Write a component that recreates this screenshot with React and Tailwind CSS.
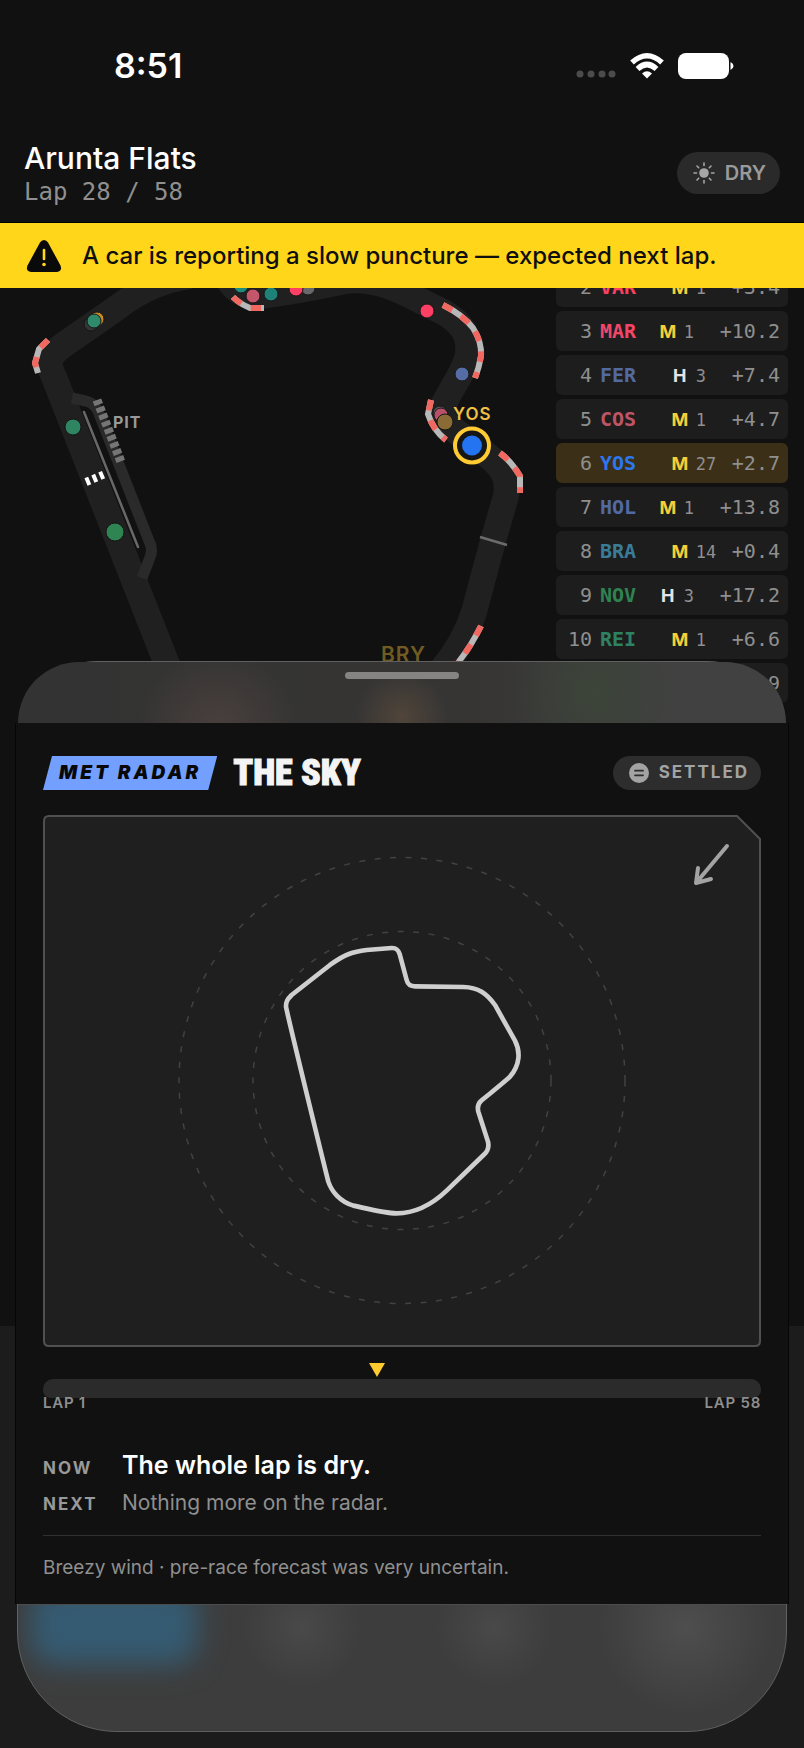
import React from 'react';
import clsx from 'clsx';

const CURRENT_LAP = 28;
const TOTAL_LAPS = 58;

const standings = [
    { pos: 2, code: 'VAR', color: 'text-[#f9405f]', tyre: 'M', age: 1, gap: '+3.4' },
    { pos: 3, code: 'MAR', color: 'text-[#f24568]', tyre: 'M', age: 1, gap: '+10.2' },
    { pos: 4, code: 'FER', color: 'text-[#5269a2]', tyre: 'H', age: 3, gap: '+7.4' },
    { pos: 5, code: 'COS', color: 'text-[#bd5567]', tyre: 'M', age: 1, gap: '+4.7' },
    { pos: 6, code: 'YOS', color: 'text-[#2c76ee]', tyre: 'M', age: 27, gap: '+2.7', selected: true },
    { pos: 7, code: 'HOL', color: 'text-[#5269a2]', tyre: 'M', age: 1, gap: '+13.8' },
    { pos: 8, code: 'BRA', color: 'text-[#3a7b98]', tyre: 'M', age: 14, gap: '+0.4' },
    { pos: 9, code: 'NOV', color: 'text-[#2e8350]', tyre: 'H', age: 3, gap: '+17.2' },
    { pos: 10, code: 'REI', color: 'text-[#2e8263]', tyre: 'M', age: 1, gap: '+6.6' },
];

const kerbs = [
    'M48 340 L39 349 L35 363 L38 373',
    'M233 297 Q240 304 250 308 L264 308',
    'M443 305 Q463 315 473 328 Q482 342 481 356 Q479 368 475 378',
    'M431 400 L428 414 Q433 430 446 440',
    'M500 453 Q511 461 520 476 L520 493',
    'M481 626 Q471 646 460 660 L452 672',
];

const cars = [
    { x: 91, y: 324, r: 7, fill: '#333735' },
    { x: 97, y: 319, r: 7, fill: '#c98a25' },
    { x: 94, y: 321, r: 7, fill: '#2f8a6c' },
    { x: 241, y: 286, r: 7, fill: '#1f8a7e' },
    { x: 253, y: 296, r: 7, fill: '#c4566b' },
    { x: 271, y: 294, r: 7, fill: '#1f8279' },
    { x: 308, y: 288, r: 7, fill: '#68686c' },
    { x: 296, y: 289, r: 7, fill: '#ff4064' },
    { x: 73, y: 427, r: 8, fill: '#2f8562' },
    { x: 115, y: 532, r: 9, fill: '#2f8552' },
    { x: 427, y: 311, r: 7, fill: '#ff4064' },
    { x: 462, y: 374, r: 7, fill: '#556da4' },
    { x: 440, y: 413, r: 7, fill: '#5a5a5a' },
    { x: 441, y: 415, r: 7, fill: '#b9506a' },
    { x: 445, y: 422, r: 8, fill: '#8a6a35' },
];

const StatusBar = () => (
    <div className="flex h-[132px] items-center justify-between pl-[114px] pr-[70px]">
        <span className="text-[34px] leading-10 font-semibold text-white">8:51</span>
        <div className="flex items-center gap-3.5">
            <svg width="40" height="28" viewBox="0 0 40 28" fill="#4c4c4c">
                <circle cx="4" cy="22" r="3.5" />
                <circle cx="15" cy="22" r="3.5" />
                <circle cx="26" cy="22" r="3.5" />
                <circle cx="36" cy="22" r="3.5" />
            </svg>
            <svg width="34" height="28" viewBox="0 0 34 28" fill="none" stroke="#fff" strokeWidth="5.500">
                <path d="M2 10.500 Q17 -3 32 10.500" />
                <path d="M7.500 17 Q17 8 26.500 17" />
                <path d="M17 26.500 L12 21.500 Q17 17 22 21.500 Z" fill="#fff" stroke="none" />
            </svg>
            <svg width="56" height="28" viewBox="0 0 56 28" fill="#fff">
                <rect x="0" y="1" width="51" height="26" rx="8" />
                <path d="M52.500 10 Q55.500 11.500 55.500 14 Q55.500 16.500 52.500 18 Z" />
            </svg>
        </div>
    </div>
);

const RaceHeader = () => (
    <header className="flex h-[90px] items-start justify-between px-6">
        <div className="pt-2">
            <h1 className="text-[30px] leading-9 font-medium text-white">Arunta Flats</h1>
            <p className="font-['DejaVu_Sans_Mono',monospace] text-2xl leading-8 text-[#8f8f8f]">
                Lap {CURRENT_LAP} / {TOTAL_LAPS}
            </p>
        </div>
        <span className="mt-5 flex h-[42px] items-center gap-2.5 rounded-full bg-[#2a2a2a] pl-4 pr-3.5 text-xl font-semibold text-[#9a9a9a]">
            <svg width="22" height="22" viewBox="0 0 22 22" stroke="#a6a6a6" strokeWidth="1.600" strokeLinecap="round">
                <circle cx="11" cy="11" r="4.800" fill="#a6a6a6" stroke="none" />
                <path d="M11 1V3.500M11 18.500V21M1 11H3.500M18.500 11H21M4 4L5.700 5.700M16.300 16.300L18 18M4 18L5.700 16.300M16.300 5.700L18 4" />
            </svg>
            DRY
        </span>
    </header>
);

const Banner = () => (
    <div role="alert" className="absolute inset-x-0 top-0 z-10 flex h-[66px] items-center gap-5 border-t border-black bg-[#ffd61a] px-[26px] text-2xl font-medium text-[#0f0f0f]">
        <svg width="36" height="34" viewBox="0 0 36 34">
            <path d="M18 1 Q20.500 1 22 3.500 L34.500 26.500 Q36.500 32.500 31 33 H5 Q-0.500 32.500 1.500 26.500 L14 3.500 Q15.500 1 18 1 Z" fill="#0a0a0a" />
            <path d="M18 11 V20" stroke="#ffd61a" strokeWidth="2.600" strokeLinecap="round" />
            <circle cx="18" cy="25.500" r="1.800" fill="#ffd61a" />
        </svg>
        A car is reporting a slow puncture — expected next lap.
    </div>
);

const CircuitMap = () => (
    <svg viewBox="0 222 556 450" className="w-full" fontFamily="Inter, sans-serif">
        {/* racing surface */}
        <path
            d="M170 672 L54 377 C46 362 50 355 62 346 L118 307 Q150 282 190 276 M220 262 C228 286 240 298 260 296 Q305 290 345 281 C380 276 410 296 435 308 C462 320 470 335 468 354 C466 368 454 384 446 400 C438 412 442 420 453 429 L487 455 C503 468 509 478 506 496 L493 541 L474 612 Q464 644 440 672"
            fill="none" stroke="#202020" strokeWidth="26" strokeLinejoin="round"
        />
        {/* pit lane */}
        <path d="M72 398 L86 401 Q94 403 98 411 L149 541 Q154 550 149 560 L142 578" fill="none" stroke="#2a2a2a" strokeWidth="11" />
        <path d="M84 412 L138 547" stroke="#686868" strokeWidth="2.500" strokeLinecap="round" />
        <path d="M97 400 L121 462" stroke="#757575" strokeWidth="9" strokeDasharray="5 2.600" />
        <path d="M86 482 L105 474" stroke="#fff" strokeWidth="8" strokeDasharray="4 3.500" />
        <path d="M480 537 L507 545" stroke="#6c6c6c" strokeWidth="2.500" />
        <text x="113" y="428" fontSize="16" fontWeight="700" fill="#999" letterSpacing="1">PIT</text>

        {kerbs.map((d) => (
            <g key={d} fill="none" strokeWidth="6">
                <path d={d} stroke="#b8b8b8" />
                <path d={d} stroke="#f0685f" strokeDasharray="10.500 10.500" />
            </g>
        ))}
        {cars.map((car) => (
            <circle key={`${car.x}-${car.y}`} cx={car.x} cy={car.y} r={car.r} fill={car.fill} stroke="#161616" strokeWidth="1" />
        ))}

        <text x="453" y="420" fontSize="17" fontWeight="600" fill="#eec043" letterSpacing="1">YOS</text>
        <circle cx="472" cy="445.500" r="17" fill="#161616" stroke="#ffcb34" strokeWidth="4" />
        <circle cx="472" cy="445.500" r="10" fill="#2474f2" />
        <text x="381" y="662" fontSize="21" fontWeight="600" fill="#705b22" letterSpacing="1">BRY</text>
    </svg>
);

const StandingRow = ({ driver }) => (
    <li
        className={clsx(
            "flex h-10 items-baseline rounded-md pr-2 font-['DejaVu_Sans_Mono',monospace] text-xl leading-10 text-[#8f8f8f]",
            driver.selected ? 'bg-[#3b2f17]' : 'bg-[#1d1d1d]'
        )}
    >
        <span className="w-9 text-right">{driver.pos}</span>
        <span className={clsx('ml-2 font-bold', driver.color)}>{driver.code}</span>
        <span className={clsx("ml-auto w-6 text-center font-['Inter',sans-serif] text-lg leading-9 font-bold", driver.tyre === 'M' ? 'text-[#f6cf38]' : 'text-[#e4e4e4]')}>
            {driver.tyre}
        </span>
        <span className="ml-1 w-9 text-[17px] leading-9">{driver.age}</span>
        <span>{driver.gap}</span>
    </li>
);

const Standings = () => (
    <ol className="flex w-[232px] shrink-0 flex-col gap-1 pt-[45px]">
        {standings.map((driver) => <StandingRow key={driver.code} driver={driver} />)}
        <li className="flex h-10 items-center justify-end rounded-md bg-[#1d1d1d] pr-2 font-['DejaVu_Sans_Mono',monospace] text-xl text-[#8f8f8f]">9</li>
    </ol>
);

const RadarPlot = () => (
    <svg viewBox="0 0 718 532" className="mt-[25px] w-full" fill="none">
        <path d="M6 1 H694 L717 24 V526 Q717 531 712 531 H6 Q1 531 1 526 V6 Q1 1 6 1 Z" fill="#1f1f1f" stroke="#505050" strokeWidth="2" />
        <circle cx="359" cy="265.500" r="223" stroke="#424242" strokeWidth="1.500" strokeDasharray="6 9.500" />
        <circle cx="359" cy="265.500" r="149" stroke="#424242" strokeWidth="1.500" strokeDasharray="6 9.500" />
        <g transform="translate(107 15) scale(.3333)">
            <path
                d="M408 530 C408 515 412 508 425 495 L540 405 C585 372 610 365 650 360 L725 354 C740 353 745 360 749 372 L770 450 C773 462 782 469 795 469 L940 471 C985 472 1010 490 1035 525 L1095 632 C1112 665 1110 705 1080 740 C1065 756 1010 798 993 813 C983 822 982 832 985 845 L1014 935 C1018 952 1015 962 1003 973 L890 1082 C850 1120 800 1150 740 1150 C705 1150 660 1138 610 1127 C570 1115 545 1085 535 1055 C526 1020 418 580 408 530 Z"
                stroke="#cfcfcf" strokeWidth="14" strokeLinejoin="round"
            />
        </g>
        {/* wind direction */}
        <path d="M684 31 L653 68 M655 53 L653 68 L668 64" stroke="#a3a3a3" strokeWidth="4" strokeLinecap="round" strokeLinejoin="round" />
    </svg>
);

const LapTimeline = () => (
    <div className="pt-8">
        <div className="relative h-[19px] rounded-t-[10px] rounded-b-lg bg-[#2b2b2b]">
            <svg
                width="18" height="14" viewBox="0 0 18 14"
                className="absolute bottom-full mb-0.5 -translate-x-1/2"
                style={{ left: `${((CURRENT_LAP - 1) / TOTAL_LAPS) * 100}%` }}
            >
                <path d="M1 0 H17 L9 14 Z" fill="#ffca30" />
            </svg>
        </div>
        <div className="relative -mt-[3px] flex justify-between text-[15px] leading-4 font-semibold tracking-wider text-[#8e8e8e]">
            <span>LAP 1</span>
            <span>LAP {TOTAL_LAPS}</span>
        </div>
    </div>
);

const WeatherSheet = () => (
    <section className="absolute inset-x-[17px] top-[661px] bottom-4 z-20 flex flex-col rounded-t-[80px] rounded-b-[100px] border border-[#606060] bg-[#3d3d3d]">
        <div className="flex h-[61px] justify-center rounded-t-[79px] bg-[radial-gradient(circle_at_26%_110%,#4a403d_0,transparent_14%),radial-gradient(circle_at_50%_90%,#50453a_0,transparent_12%),radial-gradient(circle_at_75%_50%,#3c4539_0,transparent_14%),linear-gradient(90deg,#333_0%,#363534_60%,#414141_85%)] pt-2.5">
            <div className="h-[7px] w-[114px] rounded-full bg-[#868482]" />
        </div>

        <div className="-mx-[3px] flex-1 border-x border-black/60 bg-[#111] px-[27px]">
            <div className="flex items-center pt-[33px]">
                <span className="flex h-[34px] items-center bg-[#739fff] px-4 text-[19px] font-black tracking-[3px] text-[#080808] italic [clip-path:polygon(9px_0,100%_0,calc(100%-9px)_100%,0_100%)]">
                    MET RADAR
                </span>
                <h2 className="ml-4 font-['Roboto_Condensed','Liberation_Sans_Narrow','Open_Sans_Condensed','DejaVu_Sans_Condensed',sans-serif] text-[36px] leading-[34px] font-black text-[#f4f4f4] [-webkit-text-stroke:1px_#f4f4f4]">THE SKY</h2>
                <span className="ml-auto flex h-[34px] items-center gap-2.5 rounded-full bg-[#2d2d2d] pr-3 pl-4 text-[17px] font-bold tracking-[2px] text-[#a3a3a3]">
                    <svg width="20" height="20" viewBox="0 0 20 20">
                        <circle cx="10" cy="10" r="10" fill="#a3a3a3" />
                        <path d="M6 7.700H14M6 12.300H14" stroke="#2d2d2d" strokeWidth="1.800" strokeLinecap="round" />
                    </svg>
                    SETTLED
                </span>
            </div>

            <RadarPlot />
            <LapTimeline />

            <dl className="mt-9 grid grid-cols-[79px_1fr] items-baseline gap-y-1 border-b border-[#303030] pb-4">
                <dt className="text-[17px] font-bold tracking-[2px] text-[#999]">NOW</dt>
                <dd className="text-[25px] leading-9 font-semibold text-white">The whole lap is dry.</dd>
                <dt className="text-[17px] font-bold tracking-[2px] text-[#999]">NEXT</dt>
                <dd className="text-[21px] leading-8 text-[#8f8f8f]">Nothing more on the radar.</dd>
            </dl>
            <p className="mt-4 text-[19px] leading-8 text-[#8f8f8f]">Breezy wind · pre-race forecast was very uncertain.</p>
        </div>

        <div className="relative h-[127px] overflow-hidden rounded-b-[99px] border-t border-[#4c4c4c] bg-[radial-gradient(circle_at_37%_18%,#494949_0,transparent_12%),radial-gradient(circle_at_62%_18%,#494949_0,transparent_12%),radial-gradient(circle_at_87%_18%,#4e4e4e_0,transparent_13%)]">
            <div className="absolute -top-5 left-3 h-20 w-42 rounded-3xl bg-[#355b72] blur-[14px]" />
        </div>
    </section>
);

const App = () => {
    return (
        <div className="relative flex min-h-screen flex-col overflow-hidden bg-[#111] font-['Inter',sans-serif]">
            <StatusBar />
            <RaceHeader />
            <main className="relative flex flex-1 items-start pr-4">
                <Banner />
                <div className="min-w-0 flex-1"><CircuitMap /></div>
                <Standings />
            </main>
            <div className="h-[422px] bg-[#1c1c1c]" />
            <WeatherSheet />
        </div>
    );
};

export default App;
